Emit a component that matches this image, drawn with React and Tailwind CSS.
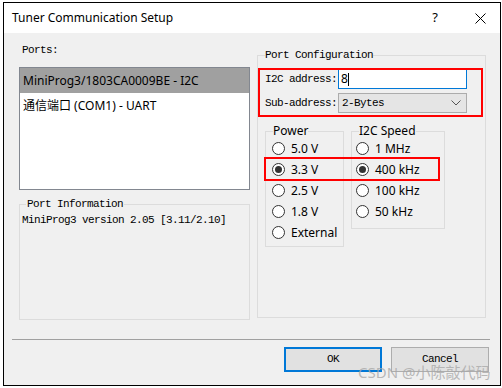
import React from "react";

const MONO = "font-['Liberation_Mono','Noto_Sans_CJK_SC',monospace] text-[11px] tracking-[-0.6px]";
const SANS = "font-['Noto_Sans','Noto_Sans_CJK_SC',sans-serif] text-[12px]";

function Radio({ checked, label, gap = "gap-[6px]" }) {
  return (
    <div className={`flex items-center h-[21px] ${gap}`}>
      <span className="w-[13px] h-[13px] rounded-full border border-[#333333] bg-white flex items-center justify-center shrink-0">
        {checked && <span className="w-[7px] h-[7px] rounded-full bg-[#333333]" />}
      </span>
      <span className={`${SANS} text-black leading-[14px]`}>{label}</span>
    </div>
  );
}

export default function App() {
  return (
    <div className="w-[502px] h-[388px] bg-white pt-[2px] pl-[3px]">
      <div className="relative w-[498px] h-[384px] border border-black flex flex-col bg-[#f0f0f0]">
        {/* Title bar */}
        <div className="h-[30px] bg-white flex items-center pl-[8px] shrink-0">
          <span className={`${SANS} text-black flex-1`}>Tuner Communication Setup</span>
          <span className={`${SANS} text-[13px] text-black mr-[37px]`}>?</span>
          <svg width="11" height="11" viewBox="0 0 11 11" className="mr-[14px]">
            <path d="M0.5 0.5 L10.5 10.5 M10.5 0.5 L0.5 10.5" stroke="#000" strokeWidth="1" />
          </svg>
        </div>

        {/* Body */}
        <div className="flex-1 flex flex-col">
          <div className="flex pl-[15px] pt-[10px] gap-[7px]">
            {/* Left column */}
            <div className="w-[231px] flex flex-col">
              <div className={`${MONO} h-[14px] leading-[14px] pl-[3px] text-black`}>Ports:</div>
              <div className="mt-[10px] h-[123px] border border-[#828790] bg-white">
                <div className={`${SANS} h-[25px] bg-[#a0a0a0] flex items-center pl-[3px] text-black`}>
                  MiniProg3/1803CA0009BE - I2C
                </div>
                <div className={`${SANS} h-[25px] flex items-center pl-[3px] text-black`}>
                  通信端口 (COM1) - UART
                </div>
              </div>
              <fieldset className="mt-[7px] h-[123px] border border-[#dcdcdc] pl-[2px]">
                <legend className={`${MONO} ml-[4px] px-[1px] h-[14px] leading-[14px] text-black`}>Port Information</legend>
                <div className={`${MONO} pt-[2px] leading-[14px] text-black`}>MiniProg3 version 2.05 [3.11/2.10]</div>
              </fieldset>
            </div>

            {/* Right column */}
            <div className="w-[229px] pt-[5px]">
              <fieldset className="h-[270px] border border-[#dcdcdc] pl-[7px]">
                <legend className={`${MONO} ml-0 px-[0px] h-[14px] leading-[14px] text-black`}>Port Configuration</legend>
                <div className="mt-[7px] flex flex-col gap-[4px]">
                  <div className="flex items-center h-[20px]">
                    <span className={`${MONO} w-[73px] text-black`}>I2C address:</span>
                    <div className="w-[129px] h-[20px] border border-[#0078d7] bg-white flex items-center pl-[2px]">
                      <span className={`${SANS} text-black leading-[14px]`}>8</span>
                      <span className="w-px h-[13px] bg-black" />
                    </div>
                  </div>
                  <div className="flex items-center h-[20px]">
                    <span className={`${MONO} w-[73px] text-black`}>Sub-address:</span>
                    <div className="w-[129px] h-[20px] border border-[#acacac] bg-[#e5e5e5] flex items-center pl-[3px] pr-[5px]">
                      <span className={`${MONO} text-black flex-1`}>2-Bytes</span>
                      <svg width="10" height="6" viewBox="0 0 10 6">
                        <path d="M0.5 0.5 L5 5 L9.5 0.5" stroke="#555" strokeWidth="1" fill="none" />
                      </svg>
                    </div>
                  </div>
                </div>

                <div className="mt-[11px] flex gap-[7px] items-start">
                  <fieldset className="w-[79px] h-[123px] border border-[#dcdcdc] pl-[6px]">
                    <legend className={`${SANS} ml-[1px] px-[0px] h-[14px] leading-[14px] text-black`}>Power</legend>
                    <Radio label="5.0 V" />
                    <Radio label="3.3 V" checked />
                    <Radio label="2.5 V" />
                    <Radio label="1.8 V" />
                    <Radio label="External" />
                  </fieldset>
                  <fieldset className="w-[94px] h-[105px] border border-[#dcdcdc] pl-[4px]">
                    <legend className={`${SANS} ml-[3px] px-[0px] h-[14px] leading-[14px] text-black`}>I2C Speed</legend>
                    <Radio label="1 MHz" />
                    <Radio label="400 kHz" checked />
                    <Radio label="100 kHz" />
                    <Radio label="50 kHz" />
                  </fieldset>
                </div>
              </fieldset>
            </div>
          </div>

          {/* Separator */}
          <div className="mt-[19px] ml-[8px] mr-[10px] h-px bg-[#a0a0a0]" />

          {/* Buttons */}
          <div className="mt-[7px] flex justify-end gap-[9px] pr-[11px]">
            <button className={`${MONO} w-[98px] h-[25px] border-2 border-[#0078d7] bg-[#e1e1e1] text-black`}>OK</button>
            <button className={`${MONO} w-[98px] h-[25px] border border-[#adadad] bg-[#e1e1e1] text-black`}>Cancel</button>
          </div>
        </div>

        {/* Red annotation boxes */}
        <div className="absolute left-[254px] top-[65px] w-[225px] h-[49px] border-2 border-[#ff0000] pointer-events-none" />
        <div className="absolute left-[260px] top-[154px] w-[176px] h-[24px] border-2 border-[#ff0000] pointer-events-none" />

        {/* Watermark */}
        <div className="absolute left-[354px] top-[360px] font-['Noto_Sans','Noto_Sans_CJK_SC',sans-serif] text-[15px] leading-[18px] text-[#a8a8a8]/80 pointer-events-none">
          CSDN @小陈敲代码
        </div>
      </div>
    </div>
  );
}
